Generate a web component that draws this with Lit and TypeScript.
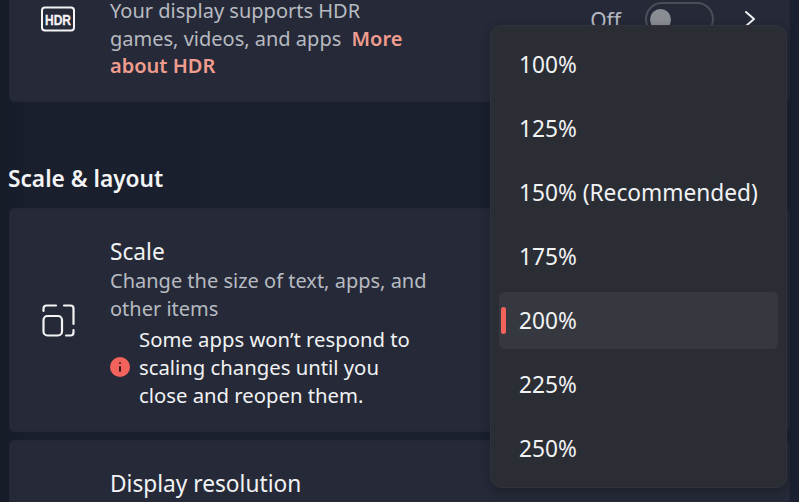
import { LitElement, html, css } from "lit";
import { customElement } from "lit/decorators.js";

const SCALES = ["100%", "125%", "150% (Recommended)", "175%", "200%", "225%", "250%"];

@customElement("app-root")
export class AppRoot extends LitElement {
  static styles = css`
    :host {
      display: block;
      position: relative;
      width: 799px;
      height: 502px;
      overflow: hidden;
      background: linear-gradient(90deg, #161b28 0, #1a1f2e 30px, #1b2030 100%);
      font-family: "Noto Sans", "Open Sans", sans-serif;
      color: #f1f2f4;
    }
    .page {
      display: flex;
      flex-direction: column;
      margin-top: -64px;
      padding: 0 9px;
    }
    .card {
      display: flex;
      align-items: center;
      box-sizing: border-box;
      background: #262a38;
      border-radius: 5px;
      border: 1px solid #222635;
    }
    .hdr-card { height: 166px; }
    .hdr-card .body { padding-top: 7px; }
    .scale-card { height: 224px; }
    .scale-card .body { padding-top: 4px; }
    .scale-card .title { margin: 1px 0 -1px; }
    .res-card { height: 120px; margin-top: 8px; align-items: flex-start; padding-top: 27px; }
    .icon-col {
      flex: none;
      box-sizing: border-box;
      width: 100px;
      padding-right: 4px;
      display: flex;
      justify-content: center;
    }
    .icon-col svg { display: block; }
    .body { width: 322px; }
    .title { font-size: 22.7px; line-height: 32px; color: #f1f2f4; }
    .sub { font-size: 20px; line-height: 27.7px; color: #b7bac1; }
    .link { color: #f09c8e; font-weight: 600; margin-left: 5px; }
    .heading {
      font-size: 22.7px;
      font-weight: 600;
      line-height: 30px;
      margin: 62px 0 14px -1px;
      color: #f3f4f5;
    }
    .warn { display: flex; align-items: center; margin-top: 3px; }
    .warn svg { flex: none; margin-right: 9px; }
    .warn-text { font-size: 20.3px; line-height: 28px; color: #f1f2f4; width: 278px; }
    .control {
      margin-left: auto;
      display: flex;
      align-items: center;
      padding-right: 33px;
    }
    .off { font-size: 21px; color: #b7bac1; margin: 2px 24px 0 0; }
    .toggle {
      box-sizing: border-box;
      width: 69px;
      height: 34px;
      border: 2px solid #4a4e59;
      border-radius: 17px;
      display: flex;
      align-items: center;
      padding-left: 3px;
      margin-right: 30px;
    }
    .thumb { width: 21px; height: 21px; border-radius: 50%; background: #8b8d95; }
    .menu {
      position: absolute;
      left: 490px;
      top: 25px;
      width: 297px;
      height: 463px;
      box-sizing: border-box;
      padding: 6px 8px;
      background: #2a2d34;
      border: 1px solid #30333b;
      border-radius: 11px;
      box-shadow: 0 3px 10px rgba(10, 12, 20, 0.35);
      display: flex;
      flex-direction: column;
      gap: 7.17px;
    }
    .item {
      position: relative;
      flex: none;
      height: 57px;
      display: flex;
      align-items: center;
      padding-left: 20px;
      font-size: 22.7px;
      color: #f1f2f4;
      border-radius: 5px;
    }
    .menu .item:first-child { margin-top: 3.5px; }
    .item.sel { background: #35383f; }
    .item.sel::before {
      content: "";
      position: absolute;
      left: 2px;
      top: 50%;
      width: 5px;
      height: 27px;
      margin-top: -14px;
      border-radius: 3px;
      background: #f4625c;
    }
  `;

  render() {
    return html`
      <div class="page">
        <div class="card hdr-card">
          <div class="icon-col">
            <svg width="36" height="26" viewBox="0 0 36 26">
              <rect x="2" y="1.5" width="32" height="23" rx="3" fill="none" stroke="#f4f4f5" stroke-width="2"></rect>
              <text x="18" y="18.5" text-anchor="middle" font-family="Liberation Sans" font-weight="700" font-size="15" textLength="26" lengthAdjust="spacingAndGlyphs" fill="#f4f4f5" stroke="#f4f4f5" stroke-width="0.3">HDR</text>
            </svg>
          </div>
          <div class="body">
            <div class="title">Use HDR</div>
            <div class="sub">Your display supports HDR games, videos, and apps <span class="link">More about HDR</span></div>
          </div>
          <div class="control">
            <span class="off">Off</span>
            <span class="toggle"><span class="thumb"></span></span>
            <svg width="12" height="18" viewBox="0 0 12 18">
              <path d="M2 2l8 7-8 7" fill="none" stroke="#f1f2f4" stroke-width="2" stroke-linecap="round" stroke-linejoin="round"></path>
            </svg>
          </div>
        </div>

        <div class="heading">Scale &amp; layout</div>

        <div class="card scale-card">
          <div class="icon-col">
            <svg width="34" height="34" viewBox="0 0 34 34" fill="none" stroke="#f4f4f5" stroke-width="2.2" stroke-linecap="round" stroke-linejoin="round">
              <rect x="2.5" y="13" width="18.5" height="19.5" rx="4"></rect>
              <path d="M2.5 8V5.5a3 3 0 0 1 3-3H15"></path>
              <path d="M23 2.5h6.5a3 3 0 0 1 3 3V21"></path>
              <path d="M32.5 27v2.5a3 3 0 0 1-3 3H25"></path>
            </svg>
          </div>
          <div class="body">
            <div class="title">Scale</div>
            <div class="sub">Change the size of text, apps, and other items</div>
            <div class="warn">
              <svg width="20" height="20" viewBox="0 0 20 20">
                <circle cx="10" cy="10" r="10" fill="#f4625c"></circle>
                <rect x="9" y="5" width="2" height="2" rx="1" fill="#3a1a1a"></rect>
                <rect x="9" y="9" width="2" height="6" rx="1" fill="#3a1a1a"></rect>
              </svg>
              <div class="warn-text">Some apps won’t respond to scaling changes until you close and reopen them.</div>
            </div>
          </div>
        </div>

        <div class="card res-card">
          <div class="icon-col"></div>
          <div class="body"><div class="title">Display resolution</div></div>
        </div>
      </div>

      <div class="menu">
        ${SCALES.map(
          (s) => html`<div class="item ${s === "200%" ? "sel" : ""}">${s}</div>`
        )}
      </div>
    `;
  }
}
